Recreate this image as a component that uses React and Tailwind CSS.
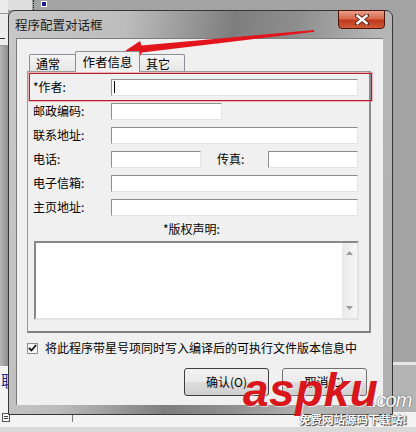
import React from "react";

const cjk = "font-['Noto_Sans_CJK_SC','Noto_Sans',sans-serif]";

// sunken edit box
const Field = ({ w, caret }) => (
  <div
    className={`${w} h-[17px] bg-white border border-t-[#8e8e8e] border-l-[#8e8e8e] border-r-[#e3e3e3] border-b-[#e3e3e3] flex items-center`}
  >
    {caret && <span className="ml-[2px] w-px h-[12px] bg-black" />}
  </div>
);

const Row = ({ label, children }) => (
  <div className="h-[24px] flex items-center">
    <span className="w-[78px] shrink-0 leading-none">{label}</span>
    {children}
  </div>
);

const Tab = ({ label, active, w }) =>
  active ? (
    <div
      className={`${w} h-[21px] -mx-[1px] relative z-10 -mb-px bg-[#f0f0f0] border border-b-0 border-[#8b8e95] rounded-t-[2px] flex items-center justify-center text-[12.5px]`}
    >
      {label}
    </div>
  ) : (
    <div
      className={`${w} h-[17px] bg-[linear-gradient(#f5f5f5,#e6e6e6)] border border-b-0 border-[#8b8e95] rounded-t-[2px] flex items-center pl-[6px] pt-[2px]`}
    >
      {label}
    </div>
  );

const Button = ({ label, primary }) => (
  <div
    className={`w-[85px] h-[28px] rounded-[3px] border ${
      primary ? "border-[#3d3d3d]" : "border-[#707070]"
    } bg-[linear-gradient(#f2f2f2_0%,#ebebeb_50%,#dddddd_51%,#cfcfcf_100%)] flex items-center justify-center`}
  >
    {label}
  </div>
);

const Triangle = ({ down }) => (
  <svg width="7" height="4" viewBox="0 0 7 4">
    <path d={down ? "M0 0h7L3.5 4z" : "M3.5 0L7 4H0z"} fill="#9b9b9b" />
  </svg>
);

export default function App() {
  return (
    <div className={`relative w-[416px] h-[432px] overflow-hidden bg-[#a3a3a3] ${cjk} text-[12px] text-black`}>
      {/* desktop behind the dialog */}
      <div className="absolute left-0 top-0 w-[32px] h-[10px] bg-[#dedede]" />
      <div className="absolute left-[33px] top-0 h-[10px] border-l border-dotted border-[#222]" />
      <div className="absolute left-[41px] top-[1px] w-[6px] h-[6px] bg-[#1a1a8a] border border-white" />
      <div className="absolute left-0 top-0 w-[8px] h-[46px] bg-[#ececec] border-b border-[#9a9a9a]">
        <div className="mt-[13px] h-px bg-[#9a9a9a]" />
        <div className="mt-[24px] w-[5px] h-px bg-[#333]" />
      </div>
      <div className="absolute left-0 top-[46px] w-[8px] h-[320px] bg-[linear-gradient(90deg,#b5b5b5,#8e8e8e)]" />
      <div className="absolute left-0 top-[366px] w-[8px] h-[46px] bg-[#f4f4f4] overflow-hidden">
        <span className="absolute left-[1px] top-[6px] text-[16px] leading-none text-[#1e2a8c]">联</span>
      </div>
      <div className="absolute right-0 top-[362px] w-[24px] h-[3px] bg-[#e6e6e6]" />
      <div className="absolute right-0 top-[365px] w-[24px] h-[50px] bg-[#b4b4b4]" />
      <div className="absolute left-0 bottom-0 w-full h-[20px] bg-[#f3f3f3] border-b-[5px] border-[#d9d9d9]">
        <div className="absolute left-[2px] top-[1px] w-[8px] h-[9px] bg-white border border-[#555] flex flex-col justify-center gap-px px-px">
          <div className="h-px bg-[#444]" />
          <div className="h-px bg-[#444]" />
        </div>
        <div className="absolute left-[18px] top-[1px] w-[50px] h-[4px] border-t-2 border-dotted border-[#333]" />
        <div className="absolute left-[72px] top-0 h-[10px] border-l border-[#777]" />
      </div>

      {/* dialog window */}
      <div className="ml-[8px] mt-[10px] w-[385px] h-[405px] rounded-t-[7px] border border-[#363636] bg-[linear-gradient(100deg,#c8c8c8_0%,#bdbdbd_26%,#7e7e7e_50%,#8e8e8e_64%,#b6b6b6_82%,#b0b0b0_100%)] flex flex-col relative">
        <div className="h-[27px] flex justify-between">
          <span className="pl-[6px] pt-[8px] text-[12.5px] text-[#1b1b1b] leading-none">程序配置对话框</span>
          <div className="mr-[7px] w-[47px] h-[19px] -mt-px rounded-b-[4px] border border-[#4a1408] bg-[linear-gradient(#e9a08c_0%,#d8684c_45%,#c0391d_55%,#cf5a3a_100%)] flex items-center justify-center">
            <svg width="14" height="11" viewBox="0 0 14 11">
              <path
                d="M1.5 1L12.5 10M12.5 1L1.5 10"
                stroke="#5a1d12"
                strokeWidth="4.2"
                strokeLinecap="square"
              />
              <path d="M1.5 1L12.5 10M12.5 1L1.5 10" stroke="#ffffff" strokeWidth="2.4" />
            </svg>
          </div>
        </div>

        {/* client area */}
        <div className="ml-[7px] w-[367px] h-[367px] bg-[#f0f0f0] border-t border-l border-[#7c7c7c] pl-[10px] pt-[12px]">
          <div className="flex items-end ml-[2px] h-[20px]">
            <Tab label="通常" w="w-[47px]" />
            <Tab label="作者信息" w="w-[65px]" active />
            <Tab label="其它" w="w-[46px]" />
          </div>

          <div className="w-[344px] h-[262px] border border-[#9a9a9a] border-r-2 border-b-2 border-r-[#8a8a8a] border-b-[#808080] pl-[5px] pt-[3px]">
            <Row label="*作者:">
              <Field w="w-[247px]" caret />
            </Row>
            <Row label="邮政编码:">
              <Field w="w-[111px]" />
            </Row>
            <Row label="联系地址:">
              <Field w="w-[247px]" />
            </Row>
            <Row label="电话:">
              <Field w="w-[90px]" />
              <span className="ml-[16px] w-[51px] shrink-0 leading-none">传真:</span>
              <Field w="w-[90px]" />
            </Row>
            <Row label="电子信箱:">
              <Field w="w-[247px]" />
            </Row>
            <Row label="主页地址:">
              <Field w="w-[247px]" />
            </Row>
            <div className="h-[20px] flex items-center pl-[130px] leading-none">*版权声明:</div>
            <div className="ml-[1px] mt-[2px] w-[325px] h-[79px] bg-white border-2 border-t-[#888] border-l-[#888] border-r-[#e3e3e3] border-b-[#e3e3e3] flex justify-end">
              <div className="w-[15px] h-full bg-[linear-gradient(90deg,#e9e9e9,#f6f6f6)] flex flex-col items-center justify-between py-[8px]">
                <Triangle />
                <Triangle down />
              </div>
            </div>
          </div>

          <div className="mt-[8px] h-[14px] flex items-center">
            <div className="w-[11px] h-[11px] border border-[#8e8f8f] bg-[linear-gradient(#f2f2f2,#ffffff)] flex items-center justify-center">
              <svg width="9" height="8" viewBox="0 0 9 8">
                <path d="M1 4l2.5 2.5L8 1" stroke="#111" strokeWidth="1.8" fill="none" />
              </svg>
            </div>
            <span className="ml-[7px] leading-none">将此程序带星号项同时写入编译后的可执行文件版本信息中</span>
          </div>

          <div className="mt-[13px] flex justify-end gap-[13px] pr-[16px]">
            <Button label="确认(O)" primary />
            <Button label="取消(C)" />
          </div>
        </div>
      </div>

      {/* annotation: highlight and arrow */}
      <div className="absolute left-[29px] top-[73px] w-[343px] h-[28px] border border-[#b61e2a] shadow-[0_0_0_1px_rgba(232,130,138,0.55)]" />
      <svg className="absolute left-0 top-0" width="416" height="80" viewBox="0 0 416 80">
        <path
          d="M122 53L140 41L141.5 45.5L314 30L314.5 31.8L142 52.5L137 61Z"
          fill="#e3141c"
        />
      </svg>

      {/* site watermark */}
      <div className="absolute left-[243px] top-[367px] font-['Liberation_Sans',sans-serif] italic font-bold text-[46px] tracking-[0.5px] leading-none text-[#d8161c] [text-shadow:1px_1px_0_rgba(255,255,255,0.6)]">
        aspku
      </div>
      <div className="absolute left-[372px] top-[390px] font-['Liberation_Sans',sans-serif] italic text-[20px] tracking-[-1px] leading-none text-white [text-shadow:0_0_1px_#555,0_0_1px_#555]">
        .com
      </div>
      <div className="absolute left-[299px] top-[414px] text-[11.5px] leading-none text-white font-bold [text-shadow:0_0_1px_#333,1px_1px_1px_#333]">
        免费网站源码下载站!
      </div>
    </div>
  );
}
